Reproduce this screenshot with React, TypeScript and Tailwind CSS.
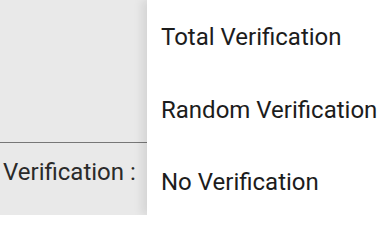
import React from 'react';

const options = ['Total Verification', 'Random Verification', 'No Verification'];

export default function App() {
  return (
    <div className="w-[391px] h-[215px] flex overflow-hidden bg-white font-['Roboto',sans-serif] text-[24px] leading-[28px]">
      {/* Form panel behind the menu */}
      <div className="w-[147px] shrink-0 flex flex-col bg-[#e9e9e9]">
        <div className="h-[143px] border-b border-[#777777]" />
        <div className="pt-[15px] pl-[3px] whitespace-nowrap text-[#2a2a2a]">Verification :</div>
      </div>

      {/* Dropdown menu */}
      <div className="relative z-10 flex-1 flex flex-col gap-[44.5px] pt-[23px] pl-[14px] bg-white shadow-[-5px_0_9px_rgba(0,0,0,0.09)]">
        {options.map((opt) => (
          <div key={opt} className="whitespace-nowrap text-[#1c1c1c]">
            {opt}
          </div>
        ))}
      </div>
    </div>
  );
}
